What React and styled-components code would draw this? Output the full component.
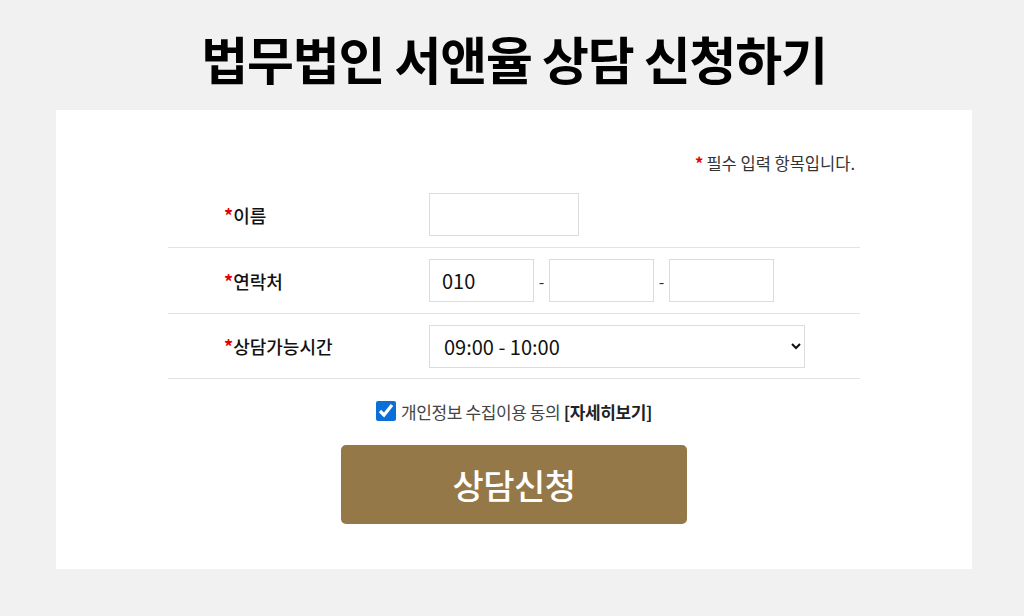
import React, { useState } from 'react';
import styled, { createGlobalStyle } from 'styled-components';

const GlobalStyle = createGlobalStyle`
  html, body {
    margin: 0;
    padding: 0;
    background: #f1f1f1;
    font-family: "Noto Sans CJK KR", "Noto Sans", sans-serif;
  }
`;

const Page = styled.div`
  width: 1024px;
  height: 616px;
  box-sizing: border-box;
  padding-left: 4px;
  display: flex;
  flex-direction: column;
  align-items: center;
  overflow: hidden;
`;

const Title = styled.h1`
  margin: 22px 0 0;
  height: 88px;
  font-size: 51px;
  font-weight: 700;
  color: #000;
  letter-spacing: -1.2px;
  line-height: 72px;
`;

const Card = styled.div`
  width: 916px;
  height: 459px;
  background: #fff;
  box-sizing: border-box;
  padding: 40px 0 0;
  display: flex;
  flex-direction: column;
  align-items: center;
`;

const Form = styled.form`
  width: 692px;
  display: flex;
  flex-direction: column;
  align-items: center;
`;

const Note = styled.p`
  align-self: flex-end;
  margin: 0 5px 0 0;
  height: 32px;
  font-size: 16.5px;
  line-height: 26px;
  color: #333;
`;

const Star = styled.span`
  color: #e50000;
  font-weight: 700;
  margin-right: ${(p) => (p.$gap ? '3px' : '0')};
`;

const Row = styled.div`
  width: 100%;
  height: ${(p) => (p.$short ? '65px' : '66px')};
  display: grid;
  grid-template-columns: 261px 1fr;
  align-items: center;
  border-bottom: 1px solid #e2e2e2;
  box-sizing: border-box;
`;

const Label = styled.label`
  padding-left: 56px;
  font-size: 18px;
  font-weight: 500;
  color: #111;
`;

const Field = styled.div`
  display: flex;
  align-items: center;
`;

const TextInput = styled.input`
  width: ${(p) => p.$w}px;
  height: 43px;
  box-sizing: border-box;
  border: 1px solid #dcdcdc;
  padding: 0 12px;
  font-family: inherit;
  font-size: 20px;
  color: #111;
  outline: none;
`;

const Dash = styled.span`
  width: 15px;
  text-align: center;
  font-size: 16px;
  color: #333;
`;

const Select = styled.select`
  width: 376px;
  height: 43px;
  box-sizing: border-box;
  border: 1px solid #dcdcdc;
  padding: 0 10px;
  font-family: inherit;
  font-size: 20px;
  color: #111;
  background: #fff;
  outline: none;
`;

const Agree = styled.div`
  display: flex;
  align-items: center;
  gap: 4px;
  margin-top: 20px;
  height: 24px;
  font-size: 17px;
  color: #444;
  letter-spacing: -0.4px;

  input {
    width: 20px;
    height: 20px;
    margin: 0 1px 0 0;
    accent-color: #0a6fd6;
  }

  b {
    color: #222;
    font-weight: 700;
  }
`;

const Submit = styled.button`
  margin-top: 22px;
  width: 346px;
  height: 79px;
  border: none;
  border-radius: 5px;
  background: #957847;
  color: #fff;
  font-family: inherit;
  font-size: 34px;
  font-weight: 500;
  letter-spacing: -0.5px;
  cursor: pointer;
`;

export default function App() {
  const [agree, setAgree] = useState(true);
  return (
    <Page>
      <GlobalStyle />
      <Title>법무법인 서앤율 상담 신청하기</Title>
      <Card>
        <Form onSubmit={(e) => e.preventDefault()}>
          <Note>
            <Star $gap>*</Star>필수 입력 항목입니다.
          </Note>
          <Row>
            <Label><Star>*</Star>이름</Label>
            <Field>
              <TextInput $w={150} />
            </Field>
          </Row>
          <Row>
            <Label><Star>*</Star>연락처</Label>
            <Field>
              <TextInput $w={105} defaultValue="010" />
              <Dash>-</Dash>
              <TextInput $w={105} />
              <Dash>-</Dash>
              <TextInput $w={105} />
            </Field>
          </Row>
          <Row $short>
            <Label><Star>*</Star>상담가능시간</Label>
            <Field>
              <Select defaultValue="09:00 - 10:00">
                <option>09:00 - 10:00</option>
                <option>10:00 - 11:00</option>
                <option>11:00 - 12:00</option>
                <option>13:00 - 14:00</option>
                <option>14:00 - 15:00</option>
              </Select>
            </Field>
          </Row>
          <Agree>
            <input type="checkbox" checked={agree} onChange={() => setAgree(!agree)} />
            <span>개인정보 수집이용 동의 <b>[자세히보기]</b></span>
          </Agree>
          <Submit type="submit">상담신청</Submit>
        </Form>
      </Card>
    </Page>
  );
}
